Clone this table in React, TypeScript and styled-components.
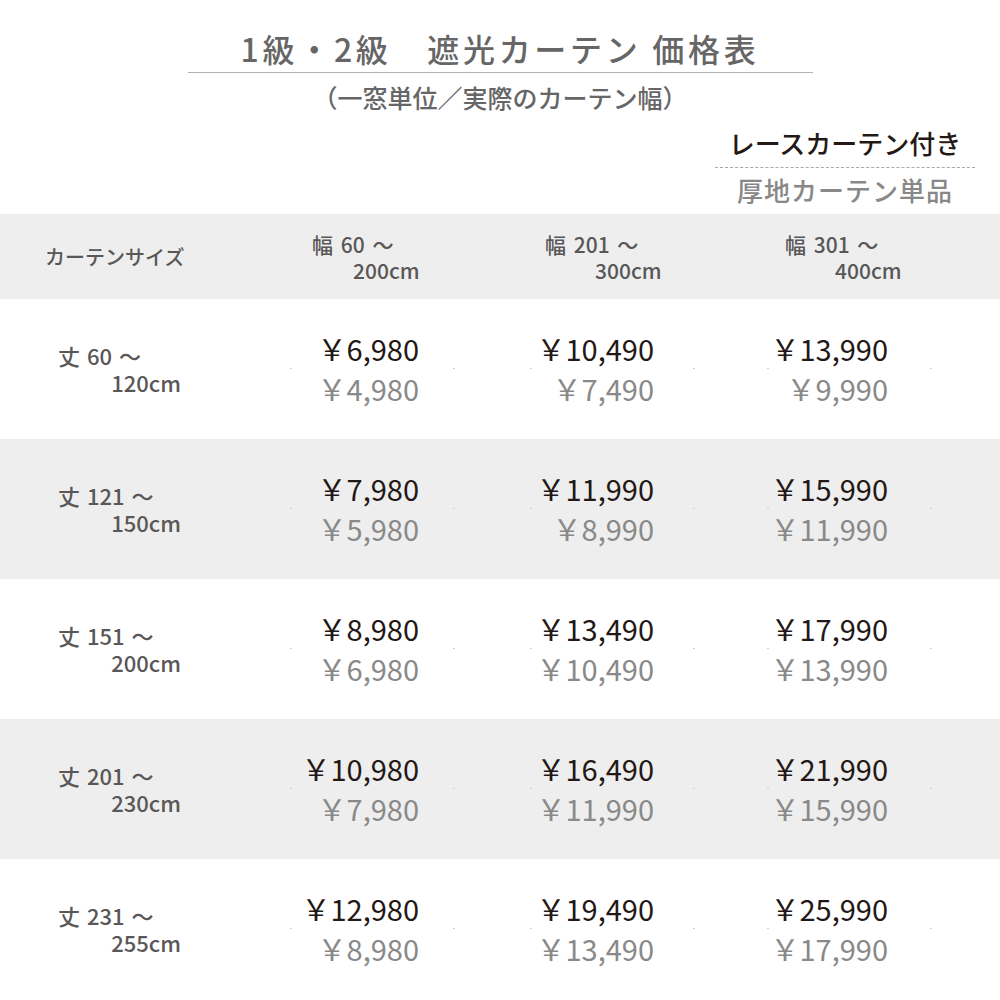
import React from "react";
import styled, { createGlobalStyle } from "styled-components";

const GlobalStyle = createGlobalStyle`
  html, body { margin: 0; padding: 0; background: #ffffff; }
  body { font-family: "Noto Sans CJK JP", "Noto Sans", sans-serif; }
`;

const Page = styled.div`
  width: 1000px;
  height: 1000px;
  overflow: hidden;
  background: #ffffff;
`;

const Heading = styled.header`
  display: flex;
  flex-direction: column;
  align-items: center;
  padding-top: 28px;
`;

const Title = styled.h1`
  margin: 0;
  font-size: 32px;
  line-height: 40px;
  font-weight: 500;
  color: #666666;
  letter-spacing: 3.7px;
`;

const Rule = styled.div`
  width: 625px;
  height: 1px;
  background: #b9b1aa;
  margin-top: 4px;
`;

const Subtitle = styled.p`
  margin: 8px 0 0;
  font-size: 25px;
  line-height: 32px;
  font-weight: 500;
  color: #666666;
`;

const Legend = styled.div`
  width: 260px;
  margin: 13px 0 0 715px;
  display: flex;
  flex-direction: column;
  align-items: center;
`;

const LegendMain = styled.div`
  font-size: 26px;
  line-height: 34px;
  font-weight: 500;
  color: #231815;
`;

const LegendRule = styled.div`
  align-self: stretch;
  border-top: 1px dashed #a8a8a8;
  margin-top: 7px;
`;

const LegendSub = styled.div`
  margin-top: 5px;
  font-size: 26px;
  line-height: 34px;
  font-weight: 500;
  letter-spacing: 1px;
  color: #888888;
`;

const Table = styled.section`
  margin-top: 7px;
  display: flex;
  flex-direction: column;
`;

const Row = styled.div<{ $shade: boolean; $height: number }>`
  display: grid;
  grid-template-columns: 290px 240px 237px 1fr;
  height: ${(p) => p.$height}px;
  background: ${(p) => (p.$shade ? "#eeeeee" : "#ffffff")};
`;

const SizeHead = styled.div`
  align-self: center;
  padding-left: 45px;
  font-size: 20px;
  line-height: 28px;
  font-weight: 500;
  color: #595757;
`;

const RangeBlock = styled.div<{ $left: number }>`
  align-self: center;
  padding-left: ${(p) => p.$left}px;
  font-size: 21px;
  line-height: 26px;
  font-weight: 500;
  color: #595757;
  white-space: nowrap;
`;

const RangeLine = styled.div<{ $indent?: number }>`
  padding-left: ${(p) => p.$indent ?? 0}px;
  word-spacing: 3px;
`;

const LabelBlock = styled.div`
  align-self: center;
  margin-left: 58px;
  width: 123px;
  font-size: 22px;
  line-height: 27px;
  font-weight: 500;
  color: #595757;
  white-space: nowrap;
  word-spacing: 2px;
`;

const LabelEnd = styled.div`
  text-align: right;
`;

const PriceCell = styled.div<{ $inset: number }>`
  width: 165px;
  display: flex;
  flex-direction: column;
  justify-content: center;
  text-align: right;
  font-size: 29px;
  line-height: 39px;
  white-space: nowrap;
  & > div:not(:nth-child(2)) {
    padding-right: ${(p) => p.$inset}px;
  }
`;

const LacePrice = styled.div`
  color: #231815;
  margin-top: -2px;
`;

const SinglePrice = styled.div`
  color: #898989;
`;

const Divider = styled.div`
  height: 1px;
  display: flex;
  justify-content: space-between;
  &::before,
  &::after {
    content: "";
    width: 2px;
    height: 1px;
    background: #cfcfcf;
  }
`;

const heads = [
  { from: "幅 60 ～", to: "200cm", left: 22, indent: 41 },
  { from: "幅 201 ～", to: "300cm", left: 15, indent: 50 },
  { from: "幅 301 ～", to: "400cm", left: 18, indent: 50 },
];

const insets = [36, 41, 44];

const rows = [
  { from: "丈 60 ～", to: "120cm", prices: [["6,980", "4,980"], ["10,490", "7,490"], ["13,990", "9,990"]] },
  { from: "丈 121 ～", to: "150cm", prices: [["7,980", "5,980"], ["11,990", "8,990"], ["15,990", "11,990"]] },
  { from: "丈 151 ～", to: "200cm", prices: [["8,980", "6,980"], ["13,490", "10,490"], ["17,990", "13,990"]] },
  { from: "丈 201 ～", to: "230cm", prices: [["10,980", "7,980"], ["16,490", "11,990"], ["21,990", "15,990"]] },
  { from: "丈 231 ～", to: "255cm", prices: [["12,980", "8,980"], ["19,490", "13,490"], ["25,990", "17,990"]] },
];

export default function App() {
  return (
    <Page>
      <GlobalStyle />
      <Heading>
        <Title>1級・2級　遮光カーテン 価格表</Title>
        <Rule />
        <Subtitle>（一窓単位／実際のカーテン幅）</Subtitle>
      </Heading>
      <Legend>
        <LegendMain>レースカーテン付き</LegendMain>
        <LegendRule />
        <LegendSub>厚地カーテン単品</LegendSub>
      </Legend>
      <Table>
        <Row $shade $height={85}>
          <SizeHead>カーテンサイズ</SizeHead>
          {heads.map((h) => (
            <RangeBlock key={h.from} $left={h.left}>
              <RangeLine>{h.from}</RangeLine>
              <RangeLine $indent={h.indent}>{h.to}</RangeLine>
            </RangeBlock>
          ))}
        </Row>
        {rows.map((r, i) => (
          <Row key={r.from} $shade={i % 2 === 1} $height={140}>
            <LabelBlock>
              <div>{r.from}</div>
              <LabelEnd>{r.to}</LabelEnd>
            </LabelBlock>
            {r.prices.map(([lace, single], c) => (
              <PriceCell key={c} $inset={insets[c]}>
                <LacePrice>￥{lace}</LacePrice>
                <Divider />
                <SinglePrice>￥{single}</SinglePrice>
              </PriceCell>
            ))}
          </Row>
        ))}
      </Table>
    </Page>
  );
}
